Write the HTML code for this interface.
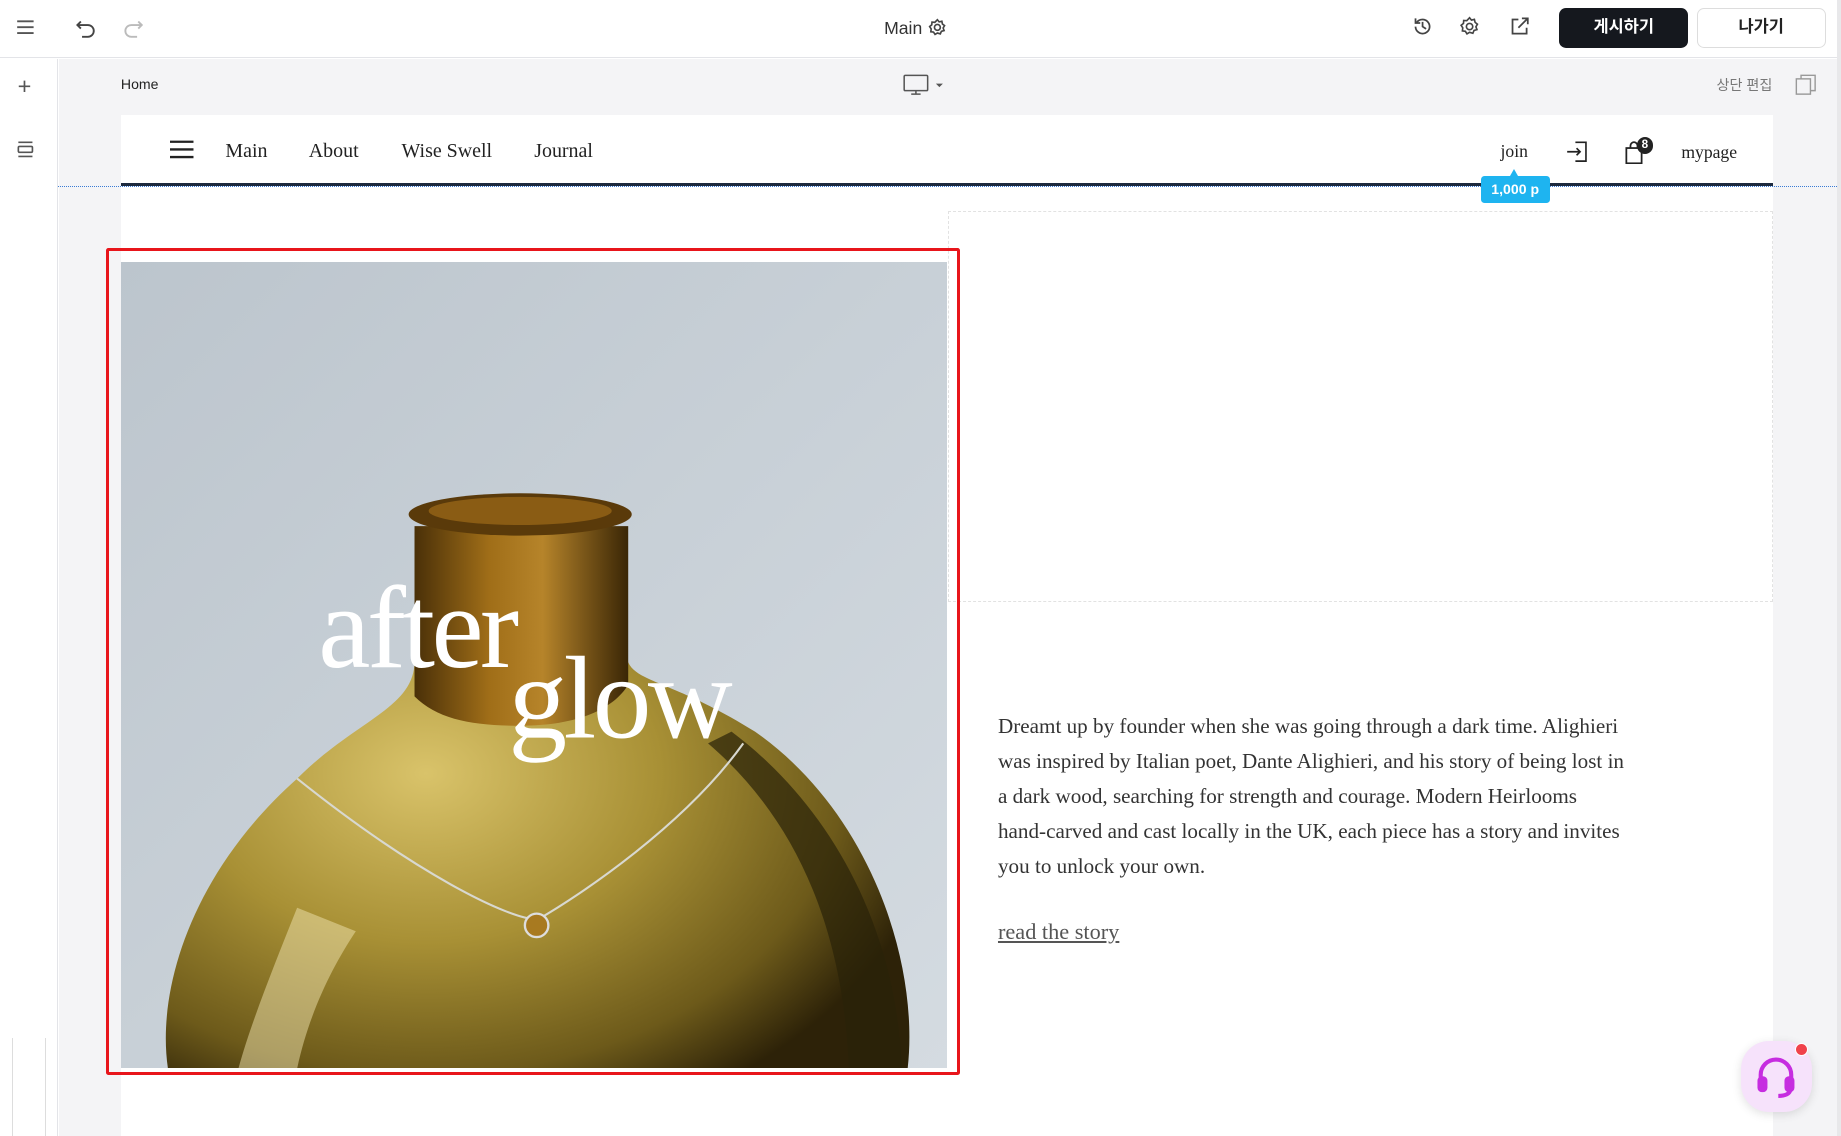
<!DOCTYPE html>
<html><head><meta charset="utf-8"><style>
*{box-sizing:border-box;margin:0;padding:0}
html,body{width:1841px;height:1136px;overflow:hidden;background:#fff}
#z{zoom:1.17411;width:1568px;height:968px;position:relative;font-family:"Liberation Sans","Noto Sans CJK KR",sans-serif;color:#222}
.a{position:absolute}
.serif{font-family:"Liberation Serif","Noto Serif CJK SC",serif}
</style></head><body><div id="z">
<!-- top bar -->
<div class="a" style="left:0;top:0;width:1568px;height:49px;background:#fff;border-bottom:1px solid #e3e4e8"></div>
<svg class="a" style="left:14px;top:16px" width="16" height="14"><path d="M1 2h14M1 7h14M1 12h14" stroke="#555" stroke-width="1.6"/></svg>
<svg class="a" style="left:64px;top:15px" width="18" height="18" fill="none" stroke="#444" stroke-width="1.6"><path d="M5 3L2 6l3 3"/><path d="M2 6h9a5 5 0 010 10H6"/></svg>
<svg class="a" style="left:105px;top:15px" width="18" height="18" fill="none" stroke="#bbb" stroke-width="1.6"><path d="M13 3l3 3-3 3"/><path d="M16 6H7a5 5 0 000 10h5"/></svg>
<div class="a" style="left:753px;top:15px;font-size:15px;color:#333">Main</div>
<svg class="a" style="left:790px;top:15px" width="16" height="16" fill="none" stroke="#444" stroke-width="1.4"><circle cx="8" cy="8" r="2.5"/><path d="M8 1.5l1.5 1.8 2.3-.5.5 2.3 1.8 1.4-1.2 2 .8 2.2-2.3.6-.9 2.2-2.5-.7-2 1.2-1.3-2-2.3-.3.3-2.4-1.3-2 1.8-1.5.2-2.3 2.4.2z"/></svg>
<svg class="a" style="left:1203px;top:14px" width="18" height="18" fill="none" stroke="#444" stroke-width="1.5"><path d="M3 9a6 6 0 106-6 6 6 0 00-5 2.5"/><path d="M3 2v4h4"/><path d="M9 5v4l3 2"/></svg>
<svg class="a" style="left:1243px;top:14px" width="18" height="18" fill="none" stroke="#444" stroke-width="1.4"><circle cx="9" cy="9" r="2.7"/><path d="M9 1.5l1.6 2 2.5-.6.6 2.5 2 1.6-1.3 2.2.9 2.4-2.5.7-1 2.4-2.8-.8-2.2 1.3-1.4-2.2-2.5-.3.3-2.6-1.4-2.2 2-1.6.2-2.5 2.6.2z"/></svg>
<svg class="a" style="left:1285px;top:14px" width="18" height="18" fill="none" stroke="#444" stroke-width="1.5"><path d="M8 3H3v12h12v-5"/><path d="M11 2h5v5M16 2L8 10"/></svg>
<div class="a" style="left:1328px;top:7px;width:110px;height:34px;background:#15181e;border-radius:6px;color:#fff;font-size:14px;font-weight:bold;text-align:center;line-height:34px">게시하기</div>
<div class="a" style="left:1445px;top:7px;width:110px;height:34px;background:#fff;border:1px solid #ddd;border-radius:6px;color:#222;font-size:14px;font-weight:bold;text-align:center;line-height:32px">나가기</div>
<div class="a" style="left:1565px;top:0;width:3px;height:968px;background:#e8e8ea"></div>
<!-- sidebar -->
<div class="a" style="left:0;top:50px;width:49px;height:918px;background:#fff;border-right:1px solid #e3e4e8"></div>
<div class="a" style="left:15px;top:62px;font-size:20px;color:#555">+</div>
<svg class="a" style="left:14px;top:119px" width="16" height="16" fill="none" stroke="#555" stroke-width="1.4"><path d="M2 2h12M2 14h12"/><rect x="2" y="5.5" width="12" height="5" rx="1"/></svg>
<div class="a" style="left:10px;top:884px;width:1px;height:84px;background:#ddd"></div>
<div class="a" style="left:38px;top:884px;width:1px;height:84px;background:#ddd"></div>
<!-- canvas -->
<div class="a" style="left:50px;top:50px;width:1515px;height:918px;background:#f4f4f6"></div>
<div class="a" style="left:103px;top:65px;font-size:12px;color:#222">Home</div>
<svg class="a" style="left:769px;top:62px" width="40" height="20" fill="none" stroke="#555" stroke-width="1.3"><rect x="1" y="2" width="20" height="13" rx="1"/><path d="M7 18h8M11 15v3"/><path d="M28 9h6l-3 3z" fill="#555" stroke="none"/></svg>
<div class="a" style="left:1462px;top:64px;font-size:12px;color:#777">상단 편집</div>
<svg class="a" style="left:1528px;top:62px" width="20" height="20" fill="none" stroke="#999" stroke-width="1.2"><rect x="2" y="5" width="12" height="13"/><path d="M6 5V2h12v13h-4"/></svg>
<!-- page -->
<div class="a" style="left:103px;top:98px;width:1407px;height:870px;background:#fff"></div>
<svg class="a" style="left:145px;top:119px" width="20" height="16"><path d="M0 1.5h20M0 8h20M0 14.5h20" stroke="#222" stroke-width="2"/></svg>
<div class="a serif" style="left:192px;top:119px;font-size:17px;color:#222">Main</div>
<div class="a serif" style="left:263px;top:119px;font-size:17px;color:#222">About</div>
<div class="a serif" style="left:342px;top:119px;font-size:17px;color:#222">Wise Swell</div>
<div class="a serif" style="left:455px;top:119px;font-size:17px;color:#222">Journal</div>
<div class="a serif" style="left:1278px;top:120px;font-size:15px;color:#222">join</div>
<svg class="a" style="left:1334px;top:119px" width="20" height="20" fill="none" stroke="#222" stroke-width="1.4"><path d="M8 2h9v16H8"/><path d="M1 10h11M9 7l3 3-3 3"/></svg>
<svg class="a" style="left:1383px;top:120px" width="18" height="20" fill="none" stroke="#222" stroke-width="1.5"><rect x="2" y="6" width="13" height="13"/><path d="M5.5 6V4a3 3 0 016 0v2"/></svg>
<div class="a" style="left:1394px;top:117px;width:14px;height:14px;border-radius:7px;background:#222;color:#fff;font-size:10px;text-align:center;line-height:14px;font-weight:bold">8</div>
<div class="a serif" style="left:1432px;top:121px;font-size:15px;color:#222">mypage</div>
<div class="a" style="left:103px;top:156px;width:1407px;height:2px;background:#1d2a3e"></div>
<div class="a" style="left:49px;top:158px;width:1516px;height:0;border-top:1px dotted #3a7bd5"></div>
<div class="a" style="left:1286px;top:144px;width:0;height:0;border-left:4px solid transparent;border-right:4px solid transparent;border-bottom:6px solid #1eb4f0"></div>
<div class="a" style="left:1261px;top:150px;width:59px;height:23px;background:#1eb4f0;border-radius:3px;color:#fff;font-size:12px;font-weight:bold;text-align:center;line-height:23px">1,000 p</div>
<div class="a" style="left:807px;top:180px;width:703px;height:333px;border:1px dashed #e2e2e2"></div>
<!-- image -->
<div class="a" style="left:90px;top:211px;width:728px;height:705px;border:3px solid #e8151b;border-radius:2px"></div>
<svg class="a" style="left:103px;top:223px" width="704" height="687" viewBox="0 0 704 687">
<defs>
<linearGradient id="bg" x1="0" y1="0" x2="1" y2="1"><stop offset="0" stop-color="#bcc5cd"/><stop offset="1" stop-color="#d4dbe1"/></linearGradient>
<radialGradient id="body" cx="0.35" cy="0.45" r="0.7"><stop offset="0" stop-color="#d9c36a"/><stop offset="0.45" stop-color="#a89035"/><stop offset="0.8" stop-color="#6d5a1a"/><stop offset="1" stop-color="#2d2208"/></radialGradient>
<linearGradient id="neck" x1="0" y1="0" x2="1" y2="0"><stop offset="0" stop-color="#4a3008"/><stop offset="0.35" stop-color="#a06e18"/><stop offset="0.6" stop-color="#b6842a"/><stop offset="1" stop-color="#3a2606"/></linearGradient>
</defs>
<rect width="704" height="687" fill="url(#bg)"/>
<path d="M250 230 L250 340 C250 380 200 390 150 440 C60 520 30 620 40 687 L670 687 C680 600 640 470 540 400 C460 350 430 360 430 330 L430 230 Z" fill="url(#body)"/>
<path d="M250 225 L250 370 C270 390 300 395 340 395 C390 395 420 380 432 360 L432 225 Z" fill="url(#neck)"/>
<ellipse cx="340" cy="215" rx="95" ry="18" fill="#5a3a0a"/>
<ellipse cx="340" cy="212" rx="78" ry="12" fill="#8a5c14"/>
<path d="M520 400 C600 460 660 560 665 687 L620 687 C615 560 570 470 500 410 Z" fill="#2a2208" opacity="0.7"/>
<path d="M150 550 C130 600 110 650 100 687 L150 687 C160 640 180 600 200 570 Z" fill="#efe3b0" opacity="0.5"/>
<path d="M150 440 C250 520 330 560 355 560 C390 540 480 480 530 410" fill="none" stroke="#d8d8d0" stroke-width="1.8"/>
<circle cx="354" cy="565" r="10" fill="#a87a20" stroke="#ddd" stroke-width="2"/>
<text x="168" y="345" font-family="Liberation Serif,serif" font-size="100" fill="#fff" style="letter-spacing:-3px">after</text>
<text x="330" y="405" font-family="Liberation Serif,serif" font-size="100" fill="#fff" style="letter-spacing:-3px">glow</text>
</svg>
<!-- paragraph -->
<div class="a serif" style="left:850px;top:604px;width:538px;font-size:18px;line-height:29.8px;color:#333">Dreamt up by founder when she was going through a dark time. Alighieri was inspired by Italian poet, Dante Alighieri, and his story of being lost in a dark wood, searching for strength and courage. Modern Heirlooms hand&#8209;carved and cast locally in the UK, each piece has a story and invites you to unlock your own.</div>
<div class="a serif" style="left:850px;top:783px;font-size:19px;color:#555;text-decoration:underline">read the story</div>
<!-- chat -->
<div class="a" style="left:1483px;top:887px;width:60px;height:60px;border-radius:24px;background:#f6e2fb;box-shadow:0 2px 8px rgba(0,0,0,.12)"></div>
<svg class="a" style="left:1496px;top:899px" width="34" height="36" fill="none" stroke="#c62de0" stroke-width="3.5"><path d="M4 22v-6a13 13 0 0126 0v6"/><rect x="3" y="19" width="5" height="10" rx="2" fill="#c62de0"/><rect x="26" y="19" width="5" height="10" rx="2" fill="#c62de0"/><path d="M29 29c0 3-4 5-10 5"/></svg>
<div class="a" style="left:1529px;top:888px;width:11px;height:11px;border-radius:6px;background:#f0424b;border:1px solid #fff"></div>
</div></body></html>
